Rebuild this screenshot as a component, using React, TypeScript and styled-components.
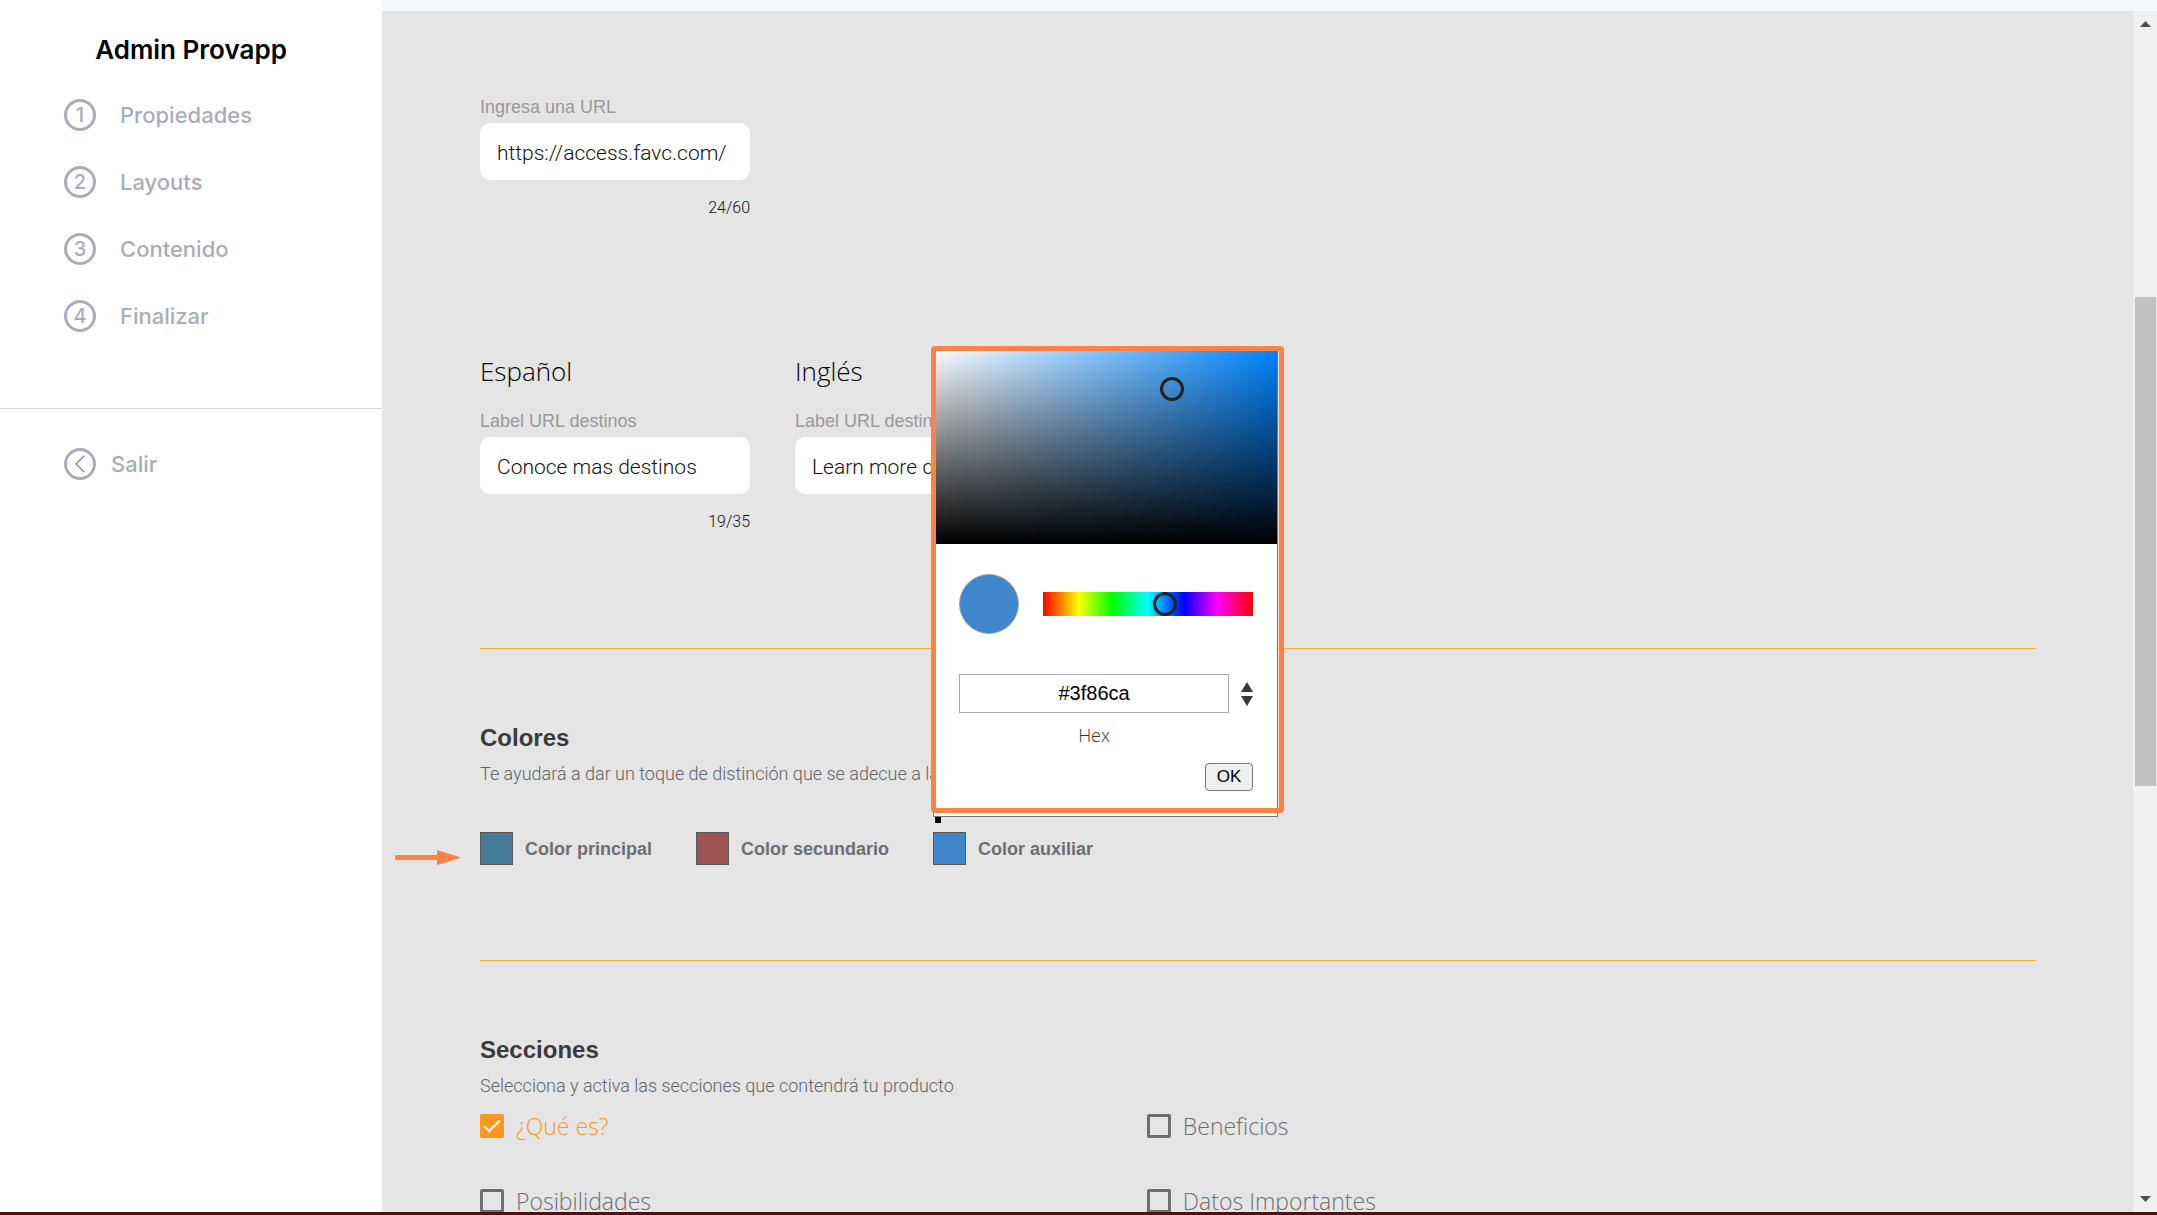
import React, { useState } from "react";
import styled, { createGlobalStyle } from "styled-components";

const helvetica = `"Liberation Sans", Arial, sans-serif`;
const helveticaLight = `Roboto, "Liberation Sans", sans-serif`;
const brand = `Inter, sans-serif`;
const brandLight = `"Open Sans", sans-serif`;

const GlobalStyle = createGlobalStyle`
  *, *::before, *::after { box-sizing: border-box; }
  body { margin: 0; background: #fff; font-family: ${helvetica}; }
`;

const Shell = styled.div`
  display: grid;
  grid-template-columns: 382px minmax(0, 1fr);
  grid-template-rows: minmax(0, 1fr) 3px;
  height: 100vh;
`;

const BottomBar = styled.div`
  grid-column: 1 / -1;
  background: #4c1016;
`;

const Sidebar = styled.aside`
  padding-top: 35px;
  background: #fff;
`;

const Brand = styled.h1`
  margin: 0 0 34px;
  color: #000;
  font: 600 26px/30px ${brand};
  text-align: center;
`;

const Steps = styled.nav`
  display: flex;
  flex-direction: column;
  gap: 35px;
  padding: 0 64px 76px;
`;

const StepLink = styled.a<{ $gap?: number }>`
  display: flex;
  align-items: center;
  gap: ${({ $gap = 24 }) => $gap}px;
  color: #aaadb8;
  font: 500 22px/32px ${brand};
  text-decoration: none;
`;

const StepCircle = styled.span`
  display: flex;
  align-items: center;
  justify-content: center;
  width: 32px;
  height: 32px;
  border: 3px solid #aaadb8;
  border-radius: 50%;
  font-size: 20px;
`;

const ExitArea = styled.div`
  padding: 39px 64px;
  border-top: 1px solid #d8d8d8;
`;

const Main = styled.div`
  display: flex;
  flex-direction: column;
  min-width: 0;
  min-height: 0;
`;

const TopStrip = styled.div`
  flex: none;
  height: 11px;
  background: #f5f7fb;
`;

const Viewport = styled.div`
  display: flex;
  flex: 1;
  min-height: 0;
`;

const Content = styled.main`
  flex: 1;
  min-width: 0;
  padding: 85px 97px 0 98px;
  overflow: hidden;
  background: #e5e5e5;
`;

const FieldBox = styled.div`
  display: flex;
  flex-direction: column;
  width: 270px;
`;

const FieldLabel = styled.label`
  margin-bottom: 5px;
  color: #999;
  font-size: 18px;
  line-height: 22px;
`;

const TextInput = styled.input`
  width: 100%;
  height: 57px;
  padding: 2px 17px 0;
  border: 0;
  border-radius: 10px;
  background: #fff;
  color: #111;
  font: 300 21px ${helveticaLight};
`;

const Counter = styled.span`
  margin-top: 17px;
  color: #111;
  font: 300 16px/22px ${helveticaLight};
  text-align: right;
`;

const Languages = styled.div`
  display: flex;
  gap: 45px;
  margin-top: 137px;
`;

const LanguageTitle = styled.h2`
  margin: 0 0 24px;
  color: #000;
  font: 300 26px/30px ${brandLight};
`;

const Section = styled.section<{ $before: number }>`
  margin-top: ${({ $before }) => $before}px;
  padding-top: 75px;
  border-top: 1px solid #fbb034;
`;

const SectionTitle = styled.h2`
  margin: 0 0 11px;
  color: #3a3a3a;
  font-size: 24px;
  line-height: 28px;
`;

const SectionText = styled.p`
  margin: 0;
  color: #626366;
  font: 300 18px/22px ${helveticaLight};
`;

const ColorRow = styled.div`
  position: relative;
  display: flex;
  gap: 44px;
  margin-top: 47px;
`;

const Pointer = styled.svg`
  position: absolute;
  top: 18px;
  left: -85px;
`;

const ColorField = styled.div`
  position: relative;
  display: flex;
  align-items: center;
  gap: 12px;
`;

const ColorInput = styled.input`
  appearance: none;
  width: 33px;
  height: 33px;
  padding: 0;
  border: 0;
  background: none;

  &::-webkit-color-swatch-wrapper { padding: 0; }
  &::-webkit-color-swatch { border: 1px solid #58595b; border-radius: 0; }
`;

const ColorLabel = styled.label`
  color: #6d6e71;
  font-size: 18px;
  font-weight: 700;
  line-height: 22px;
`;

const Picker = styled.div`
  position: absolute;
  bottom: calc(100% + 15px);
  left: 0;
  z-index: 2;
  width: 345px;
  border: 1px solid #767676;
  background: #fff;
`;

const Highlight = styled.div`
  position: absolute;
  inset: -3px -7px 3px -3px;
  border: 5px solid #ff8143;
  border-radius: 4px;
  pointer-events: none;
`;

const Anchor = styled.span`
  position: absolute;
  top: calc(100% + 1px);
  left: 1px;
  width: 6px;
  height: 6px;
  background: #000;
`;

const Shade = styled.div`
  position: relative;
  height: 195px;
  background: linear-gradient(to top, #000, transparent), linear-gradient(to right, #fff, #0084ff);
`;

const ShadeHandle = styled.button`
  position: absolute;
  top: 20.5%;
  left: 69.5%;
  width: 24px;
  height: 24px;
  margin: -12px 0 0 -12px;
  padding: 0;
  border: 3px solid #222;
  border-radius: 50%;
  background: none;
`;

const PickerBody = styled.div`
  padding: 30px 24px 25px 25px;
`;

const HueRow = styled.div`
  display: flex;
  align-items: center;
  gap: 24px;
  margin-bottom: 40px;
`;

const Preview = styled.span`
  flex: none;
  width: 60px;
  height: 60px;
  border: 1px solid #a9a9a9;
  border-radius: 50%;
  background: #3f86ca;
`;

const HueSlider = styled.input`
  appearance: none;
  flex: 1;
  min-width: 0;
  height: 24px;
  margin: 0;
  background: linear-gradient(to right, #f00, #ff0 17%, #0f0 33%, #0ff 50%, #00f 67%, #f0f 83%, #f00);

  &::-webkit-slider-thumb {
    appearance: none;
    width: 24px;
    height: 24px;
    border: 3px solid #222;
    border-radius: 50%;
    background: transparent;
  }
`;

const HexRow = styled.div`
  display: flex;
  align-items: center;
  justify-content: space-between;
`;

const HexInput = styled.input`
  width: 270px;
  height: 39px;
  padding: 0;
  border: 1px solid #a9a9a9;
  background: #fff;
  color: #000;
  font: 20px ${helvetica};
  text-align: center;
`;

const FormatButton = styled.button`
  display: flex;
  padding: 0;
  border: 0;
  background: none;
`;

const HexLabel = styled.label`
  display: block;
  width: 270px;
  margin: 11px 0 17px;
  color: #333;
  font: 300 18px/22px ${brandLight};
  text-align: center;
`;

const OkButton = styled.button`
  display: block;
  width: 48px;
  height: 28px;
  margin-left: auto;
  padding: 0;
  border: 1px solid #767676;
  border-radius: 4px;
  background: #efefef;
  color: #000;
  font: 17px ${helvetica};
`;

const CheckGrid = styled.div`
  display: grid;
  grid-template-columns: 3fr 4fr;
  row-gap: 51px;
  margin-top: 17px;
`;

const CheckRow = styled.label<{ $on: boolean }>`
  display: flex;
  align-items: center;
  gap: 12px;
  height: 24px;
  color: ${({ $on }) => ($on ? "#fb9820" : "#6d6e71")};
  font: 300 23px/24px ${brandLight};
`;

const CheckInput = styled.input`
  appearance: none;
  display: grid;
  place-items: center;
  width: 24px;
  height: 24px;
  margin: 0;
  border: 3px solid #6d6e71;
  border-radius: 2px;

  &:checked { border-color: #fb9820; background: #fb9820; }
  &:checked::before {
    content: "";
    width: 16px;
    height: 8px;
    margin-top: -5px;
    border-bottom: 2px solid #fff;
    border-left: 2px solid #fff;
    transform: rotate(-45deg);
  }
`;

const ScrollTrack = styled.div`
  display: flex;
  flex: none;
  flex-direction: column;
  align-items: center;
  width: 24px;
  background: #f0f0f0;
`;

const ScrollArrow = styled.span`
  display: flex;
  align-items: center;
  height: 26px;
`;

const ScrollPart = styled.span<{ $share: number; $thumb?: boolean }>`
  flex: ${({ $share }) => $share};
  width: 21px;
  background: ${({ $thumb }) => ($thumb ? "#c1c1c1" : "none")};
`;

function Field({ id, label, value, max, used }: { id: string; label: string; value: string; max: number; used: number }) {
  const [text, setText] = useState(value);
  const count = text === value ? used : text.length;
  return (
    <FieldBox>
      <FieldLabel htmlFor={id}>{label}</FieldLabel>
      <TextInput id={id} value={text} onChange={(e) => setText(e.target.value)} />
      <Counter>{count}/{max}</Counter>
    </FieldBox>
  );
}

function Swatch({ id, label, color, children }: { id: string; label: string; color: string; children?: React.ReactNode }) {
  return (
    <ColorField>
      <ColorInput id={id} type="color" defaultValue={color} />
      <ColorLabel htmlFor={id}>{label}</ColorLabel>
      {children}
    </ColorField>
  );
}

function ColorPicker() {
  return (
    <Picker role="dialog" aria-label="Color auxiliar">
      <Shade>
        <ShadeHandle type="button" aria-label="Tono" />
      </Shade>
      <PickerBody>
        <HueRow>
          <Preview />
          <HueSlider type="range" aria-label="Matiz" min={0} max={360} defaultValue={213} />
        </HueRow>
        <HexRow>
          <HexInput id="hex" defaultValue="#3f86ca" />
          <FormatButton type="button" aria-label="Formato">
            <svg width="12" height="24" viewBox="0 0 12 24" fill="#383838">
              <path d="M6 0l6 10H0zM0 14h12L6 24z" />
            </svg>
          </FormatButton>
        </HexRow>
        <HexLabel htmlFor="hex">Hex</HexLabel>
        <OkButton type="button">OK</OkButton>
      </PickerBody>
      <Anchor />
      <Highlight />
    </Picker>
  );
}

function Check({ label, checked = false }: { label: string; checked?: boolean }) {
  const [on, setOn] = useState(checked);
  return (
    <CheckRow $on={on}>
      <CheckInput type="checkbox" checked={on} onChange={(e) => setOn(e.target.checked)} />
      {label}
    </CheckRow>
  );
}

const steps = ["Propiedades", "Layouts", "Contenido", "Finalizar"];

export default function App() {
  return (
    <>
      <GlobalStyle />
      <Shell>
        <Sidebar>
          <Brand>Admin Provapp</Brand>
          <Steps>
            {steps.map((step, i) => (
              <StepLink key={step} href={`#${step.toLowerCase()}`}>
                <StepCircle>{i + 1}</StepCircle>
                {step}
              </StepLink>
            ))}
          </Steps>
          <ExitArea>
            <StepLink href="#salir" $gap={15}>
              <StepCircle>
                <svg width="10" height="18" viewBox="0 0 10 18" fill="none" stroke="#8e8e8e" strokeWidth="1.5">
                  <path d="M9.300.7L1 9l8.300 8.300" />
                </svg>
              </StepCircle>
              Salir
            </StepLink>
          </ExitArea>
        </Sidebar>

        <Main>
          <TopStrip />
          <Viewport>
            <Content>
              <Field id="url" label="Ingresa una URL" value="https://access.favc.com/" used={24} max={60} />

              <Languages>
                <div>
                  <LanguageTitle>Español</LanguageTitle>
                  <Field id="label-es" label="Label URL destinos" value="Conoce mas destinos" used={19} max={35} />
                </div>
                <div>
                  <LanguageTitle>Inglés</LanguageTitle>
                  <Field id="label-en" label="Label URL destinos" value="Learn more destinations" used={23} max={35} />
                </div>
              </Languages>

              <Section $before={115}>
                <SectionTitle>Colores</SectionTitle>
                <SectionText>Te ayudará a dar un toque de distinción que se adecue a la marca</SectionText>
                <ColorRow>
                  <Pointer width="66" height="15" viewBox="0 0 66 15" fill="#ff8143" aria-hidden="true">
                    <path d="M2 5h40V0l24 7.500L42 15v-5H2a2.500 2.500 0 0 1 0-5z" />
                  </Pointer>
                  <Swatch id="principal" label="Color principal" color="#457b99" />
                  <Swatch id="secundario" label="Color secundario" color="#9c5455" />
                  <Swatch id="auxiliar" label="Color auxiliar" color="#3f86ca">
                    <ColorPicker />
                  </Swatch>
                </ColorRow>
              </Section>

              <Section $before={95}>
                <SectionTitle>Secciones</SectionTitle>
                <SectionText>Selecciona y activa las secciones que contendrá tu producto</SectionText>
                <CheckGrid>
                  <Check label="¿Qué es?" checked />
                  <Check label="Beneficios" />
                  <Check label="Posibilidades" />
                  <Check label="Datos Importantes" />
                </CheckGrid>
              </Section>
            </Content>

            <ScrollTrack aria-hidden="true">
              <ScrollArrow>
                <svg width="11" height="6" viewBox="0 0 11 6" fill="#505050"><path d="M5.500 0L11 6H0z" /></svg>
              </ScrollArrow>
              <ScrollPart $share={260} />
              <ScrollPart $share={489} $thumb />
              <ScrollPart $share={400} />
              <ScrollArrow>
                <svg width="11" height="6" viewBox="0 0 11 6" fill="#505050"><path d="M0 0h11L5.500 6z" /></svg>
              </ScrollArrow>
            </ScrollTrack>
          </Viewport>
        </Main>
        <BottomBar />
      </Shell>
    </>
  );
}
